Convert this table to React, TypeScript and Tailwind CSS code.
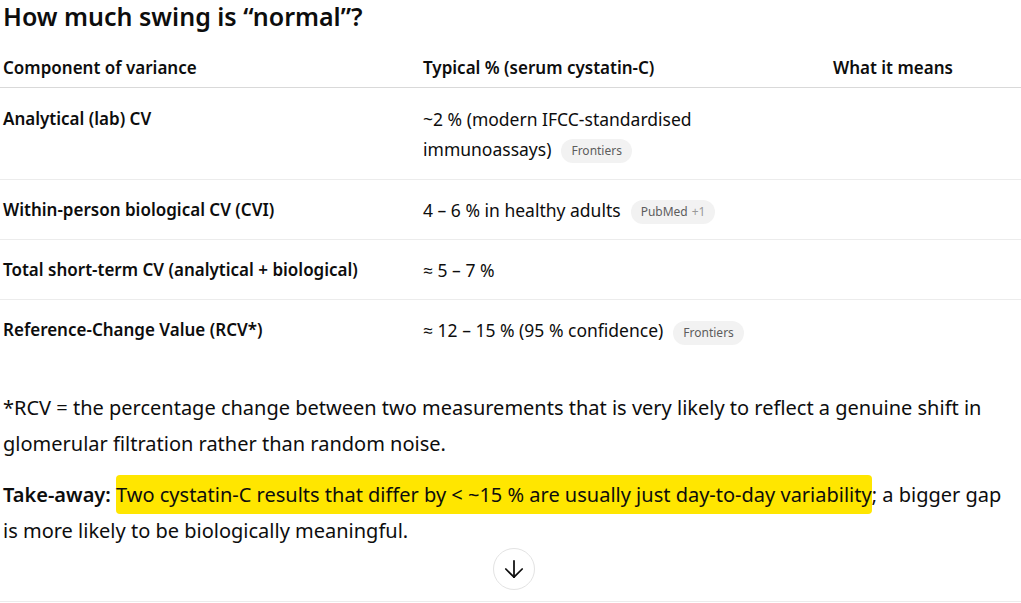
import { ArrowDown } from "lucide-react";

const font = { fontFamily: '"Noto Sans", "Open Sans", sans-serif' };

function Chip({ label, extra }: { label: string; extra?: string }) {
  return (
    <span className="ml-[10px] inline-flex h-[24px] items-center rounded-full bg-[#f2f2f2] px-[10px] align-middle text-[12px] leading-none text-[#5d5d5d]">
      {label}
      {extra && <span className="ml-1 text-[#9a9a9a]">{extra}</span>}
    </span>
  );
}

const rows = [
  {
    name: "Analytical (lab) CV",
    value: (
      <>
        ~2 % (modern IFCC-standardised immunoassays)
        <Chip label="Frontiers" />
      </>
    ),
  },
  {
    name: "Within-person biological CV (CVI)",
    value: (
      <>
        4 – 6 % in healthy adults
        <Chip label="PubMed" extra="+1" />
      </>
    ),
  },
  { name: "Total short-term CV (analytical + biological)", value: <>≈ 5 – 7 %</> },
  {
    name: "Reference-Change Value (RCV*)",
    value: (
      <>
        ≈ 12 – 15 % (95 % confidence)
        <Chip label="Frontiers" />
      </>
    ),
  },
];

export default function App() {
  return (
    <div className="relative h-[603px] w-[1021px] overflow-hidden bg-white text-[#0d0d0d]" style={font}>
      <h2 className="pl-[3px] text-[25px] font-semibold leading-[32px]">How much swing is “normal”?</h2>

      <div className="mt-[8px]">
        <div className="grid grid-cols-[420px_410px_1fr] border-b border-[#d9d9d9] pt-[14px] pb-[5px] text-[17px] font-semibold leading-[28px]">
          <div className="pl-[3px]">Component of variance</div>
          <div className="pl-[3px]">Typical % (serum cystatin-C)</div>
          <div className="pl-[3px]">What it means</div>
        </div>
        {rows.map((r, i) => (
          <div
            key={r.name}
            className={`grid grid-cols-[420px_410px_1fr] pt-4 pb-[15px] text-[17.5px] ${i === 0 ? "leading-[30px]" : "leading-[28px]"} ${i < rows.length - 1 ? "border-b border-[#ececec]" : ""}`}
          >
            <div className="pl-[3px] text-[17px] font-semibold">{r.name}</div>
            <div className="pl-[3px] pr-[50px]">{r.value}</div>
            <div />
          </div>
        ))}
      </div>

      <div className="mt-[30px] pl-[3px] pr-[3px] text-[20px] leading-[36px]">
        <p>
          *RCV = the percentage change between two measurements that is very likely to reflect a genuine shift in glomerular
          filtration rather than random noise.
        </p>
        <p className="mt-[15px]">
          <strong className="font-semibold">Take-away:</strong>{" "}
          <span className="rounded-[4px] bg-[#ffe600] py-[6px]">
            Two cystatin-C results that differ by &lt; ~15 % are usually just day-to-day variability
          </span>
          ; a bigger gap is more likely to be biologically meaningful.
        </p>
      </div>

      <button className="absolute left-[493px] top-[548px] flex h-[42px] w-[42px] items-center justify-center rounded-full border border-[#e3e3e3] bg-white">
        <ArrowDown size={28} strokeWidth={1.5} className="text-[#0d0d0d]" />
      </button>

      <div className="absolute bottom-[1px] left-0 right-0 border-b border-[#ececec]" />
    </div>
  );
}
